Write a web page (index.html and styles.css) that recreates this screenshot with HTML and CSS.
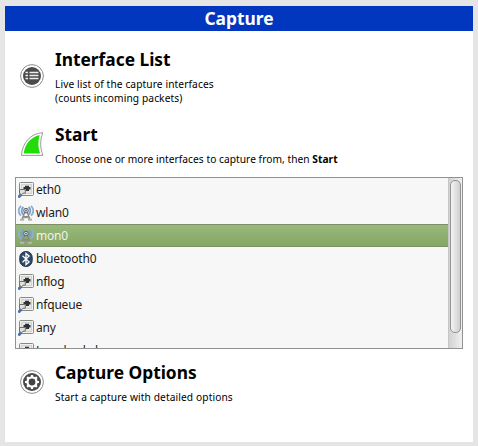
FILE: index.html
```html
<!DOCTYPE html>
<html lang="en">
<head>
<meta charset="utf-8">
<title>Capture</title>
<link rel="stylesheet" href="styles.css">
</head>
<body>
<svg class="defs" width="0" height="0">
  <symbol id="wired" viewBox="0 0 16 16">
    <rect x="1.5" y=".5" width="14" height="13" rx="1" fill="#f1f1ef" stroke="#888a85"/>
    <rect x="3.5" y="2.5" width="10" height="9" fill="#e6e6e3" stroke="#d2d2ce"/>
    <path d="M5.5 7.5V5H7V3.7h4V5h1.5v2.5H11V9H8V7.5z" fill="#2e3436"/>
    <path d="M.3 15.5 3.4 12.2" stroke="#3f74ba" stroke-width="2.8"/>
    <path d="M1.5 7.5h5.8v3.7H5L3.4 13 1.5 11z" fill="#dfe2dc" stroke="#6b6e69"/>
  </symbol>
  <symbol id="wifi" viewBox="0 0 16 16">
    <g fill="none" stroke="#8caed5" stroke-width="1.8">
      <path d="M3 .8C0 4 0 7.500 3 10.700M13 .8c3 3.200 3 6.700 0 9.900"/>
      <path d="M5.400 2C3 4.400 3 7.200 5.400 9.500M10.600 2c2.400 2.400 2.400 5.200 0 7.500" stroke="#779dcc"/>
    </g>
    <path d="M7 7 4 14M9 7l3 7M5.300 11.200l5.700 2M10.700 11.200l-5.700 2" fill="none" stroke="#888a85" stroke-width="1.300"/>
    <path d="M2 14.700h4M10 14.700h4" stroke="#b4b6b1" stroke-width="2"/>
    <circle cx="8" cy="5.600" r="2.300" fill="#c8d8ea" stroke="#555f6b"/>
    <circle cx="8" cy="5.600" r=".8" fill="#44525f"/>
  </symbol>
  <symbol id="bluetooth" viewBox="0 0 16 16">
    <rect x="1.800" y=".5" width="12.400" height="15" rx="6" fill="#2d4b68" stroke="#1d2f42"/>
    <path d="m4.500 4.700 6.600 6.200L8 13.500v-11l3.100 2.600-6.600 6.200" fill="none" stroke="#fff" stroke-width="1.300"/>
  </symbol>
</svg>
<main class="panel">
  <h1 class="title">Capture</h1>
  <section class="action list-action">
    <svg class="icon" viewBox="0 0 24 24">
      <circle cx="12" cy="12" r="11.400" fill="#fff" stroke="#8d8d8d"/>
      <circle cx="12" cy="12" r="9" fill="#4b4b4b"/>
      <path d="M5.500 8.500H8M5.500 11.500H8M5.500 14.500H8M9.500 8.500h9M9.500 11.500h9M9.500 14.500h9" stroke="#eee" stroke-width="1.700"/>
    </svg>
    <div class="copy">
      <h2>Interface List</h2>
      <p>Live list of the capture interfaces<br>(counts incoming packets)</p>
    </div>
  </section>
  <section class="action start-action">
    <svg class="icon fin" viewBox="0 0 24 24">
      <path d="M1.400 23.400C2.500 10 11 1.500 22.800.7c-3 8-2.700 15 .1 22.700z" fill="#fff" stroke="#999"/>
      <path d="M3.700 21.400C5.200 11.500 10.800 5.300 19.600 3.100c-1.800 7-1.600 12.200.4 18.300z" fill="#21dc08"/>
    </svg>
    <div class="copy">
      <h2>Start</h2>
      <p>Choose one or more interfaces to capture from, then <b>Start</b></p>
    </div>
  </section>
  <div class="interfaces">
    <ul class="rows">
      <li><svg><use href="#wired"/></svg>eth0</li>
      <li><svg><use href="#wifi"/></svg>wlan0</li>
      <li class="selected"><svg><use href="#wifi"/></svg>mon0</li>
      <li><svg><use href="#bluetooth"/></svg>bluetooth0</li>
      <li><svg><use href="#wired"/></svg>nflog</li>
      <li><svg><use href="#wired"/></svg>nfqueue</li>
      <li><svg><use href="#wired"/></svg>any</li>
      <li><svg><use href="#wired"/></svg>Loopback: lo</li>
    </ul>
    <div class="scrollbar"><div class="thumb"></div></div>
  </div>
  <section class="action options-action">
    <svg class="icon" viewBox="0 0 24 24">
      <circle cx="12" cy="12" r="11.400" fill="#fff" stroke="#8d8d8d"/>
      <circle cx="12" cy="12" r="9" fill="#4b4b4b"/>
      <circle cx="12" cy="12" r="5.700" fill="#fff"/>
      <path d="M12 5v14M5 12h14M7.100 7.100l9.800 9.800M16.900 7.100l-9.800 9.800" stroke="#fff" stroke-width="2.200"/>
      <circle cx="12" cy="12" r="3.400" fill="#444"/>
    </svg>
    <div class="copy">
      <h2>Capture Options</h2>
      <p>Start a capture with detailed options</p>
    </div>
  </section>
</main>
</body>
</html>
```
FILE: styles.css
```css
* { box-sizing: border-box; }
body {
  margin: 0;
  height: 446px;
  padding: 6px 5px 4px;
  overflow: hidden;
  background: #e5e5e5;
  color: #000;
  font-family: "Noto Sans", sans-serif;
}
.defs { position: absolute; }
h1, h2, p, ul { margin: 0; padding: 0; }
.panel { height: 436px; background: #fff; }
.title {
  height: 25px;
  background: #0037be;
  color: #fff;
  font-size: 17.33px;
  line-height: 25px;
  text-align: center;
}
.action { display: flex; gap: 11px; padding-left: 15px; }
.list-action { height: 75px; padding-top: 16px; }
.start-action { height: 71px; padding-top: 16px; }
.options-action { padding-top: 11px; }
.icon { width: 24px; height: 24px; margin-top: 17px; flex: none; }
.start-action .icon { margin-top: 10px; }
.options-action .icon { margin-top: 10px; }
h2 { font-size: 17.33px; line-height: 25px; }
p {
  margin-top: 5px;
  font-size: 10.2px;
  line-height: 14px;
  letter-spacing: .11px;
  white-space: nowrap;
}
.start-action p { letter-spacing: .04px; }
.list-action p { letter-spacing: .1px; }
.interfaces {
  display: flex;
  height: 172px;
  margin: 0 10px;
  border: 1px solid #929292;
  overflow: hidden;
}
.rows { flex: 1; list-style: none; background: #f7f7f7; }
.rows li {
  display: flex;
  align-items: center;
  height: 23px;
  padding-left: 2px;
  gap: 2px;
  color: #1a1a1a;
  font-size: 12px;
  letter-spacing: -.18px;
}
.rows svg { width: 16px; height: 16px; }
.rows .selected {
  border-top: 1px solid #7d8f69;
  border-bottom: 1px solid #7d8f69;
  background: linear-gradient(#98b97b, #86a666);
  color: #f1f3ec;
}
.scrollbar {
  width: 14px;
  padding: 2px 1px;
  border-left: 1px solid #c6c6c6;
  background: linear-gradient(90deg, #d2d2d2, #f0f0f0);
}
.thumb {
  width: 11px;
  height: 153px;
  border: 1px solid #929292;
  border-radius: 5px;
  background: linear-gradient(90deg, #f4f4f4, #cfcfcf);
}
```
